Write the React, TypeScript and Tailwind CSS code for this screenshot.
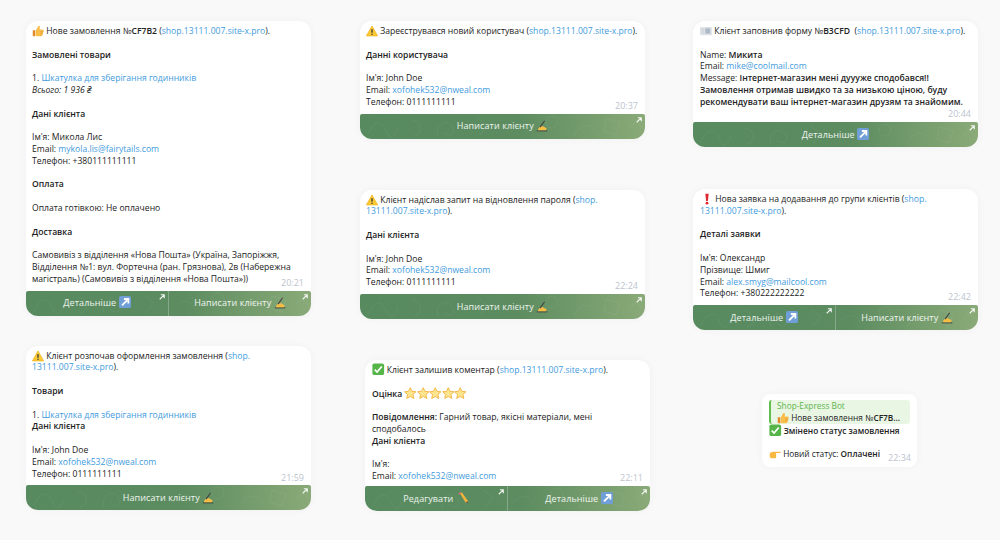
import type { ReactNode } from "react";

const LINK = "text-[#3f9bdc]";

function Thumb() {
  return (
    <svg width="12" height="12" viewBox="0 0 16 16" className="my-[-2px] inline-block align-[-1px]">
      <path d="M1 7h3.400v8H2a1 1 0 0 1-1-1z" fill="#e08a2e" />
      <path d="M5 7.200 8.400 1.600c.9-.8 2.300-.2 2.200 1.100L10.200 6H14c1.300 0 1.900 1.200 1.400 2.200l-1.500 5.600c-.2.800-.9 1.200-1.700 1.200H7c-1.200 0-2-.7-2-1.500z" fill="#f9bd4a" />
      <path d="M11 9h4M11 11.500h3.500" stroke="#dd9530" strokeWidth=".8" />
    </svg>
  );
}

function Warn() {
  return (
    <svg width="12" height="12" viewBox="0 0 16 16" className="my-[-2px] inline-block align-[-1px]">
      <path d="M8 1.200 15.500 14.500H.5z" fill="#fbc934" stroke="#f2b51f" strokeLinejoin="round" />
      <rect x="7.100" y="5.400" width="1.800" height="5" rx=".8" fill="#3b3b3b" />
      <circle cx="8" cy="12.200" r="1" fill="#3b3b3b" />
    </svg>
  );
}

function CardIndex() {
  return (
    <svg width="12" height="12" viewBox="0 0 16 16" className="my-[-2px] inline-block align-[-1px]">
      <rect x="0" y="2.500" width="16" height="11" rx="1" fill="#dfe3e8" />
      <rect x="7" y="4.500" width="6.500" height="7" fill="#aeb9c6" />
      <path d="M2 5.500h3.500M2 8h3.500M2 10.500h3.500" stroke="#c3c9d1" strokeWidth="1" />
    </svg>
  );
}

function Bang() {
  return (
    <svg width="12" height="12" viewBox="0 0 16 16" className="my-[-2px] ml-[1px] inline-block align-[-1px]">
      <path d="M5.800 1h4.400L9.200 10.500H6.800z" fill="#e0262e" />
      <circle cx="8" cy="13.500" r="1.900" fill="#e0262e" />
    </svg>
  );
}

function CheckBox() {
  return (
    <svg width="12.500" height="12.500" viewBox="0 0 16 16" className="my-[-2px] inline-block align-[-1px]">
      <rect x=".5" y=".5" width="15" height="15" rx="2.500" fill="#55b548" />
      <path d="m3.500 8.500 3 3 6-7" fill="none" stroke="#fff" strokeWidth="2.200" />
    </svg>
  );
}

function Star() {
  return (
    <svg width="12.500" height="12.500" viewBox="0 0 16 16" className="my-[-2px] inline-block align-[-1px]">
      <path d="m8 .8 2.200 4.700 5.100.6-3.800 3.500 1 5.100L8 12.200l-4.500 2.500 1-5.100L.7 6.100l5.100-.6z" fill="#fde58f" stroke="#f2b03a" strokeWidth="1.100" strokeLinejoin="round" />
    </svg>
  );
}

function Pencil() {
  return (
    <svg width="12" height="12" viewBox="0 0 16 16" className="my-[-2px] ml-[1px] inline-block align-[0px]">
      <path d="m4 1.500 2.500-1L14 11l1 4-3.800-1.500z" fill="#f5b23d" />
      <path d="M2.500 3.500 6 1 4.800 .3 1.800 1.500z" fill="#e8697a" />
      <path d="m12 13.600 2-1.300 1 2.900z" fill="#444" />
    </svg>
  );
}

function WriteHand() {
  return (
    <svg width="12" height="12" viewBox="0 0 16 16" className="my-[-2px] inline-block align-[-1px]">
      <path d="M1 14.500h14" stroke="#3b3b3b" strokeWidth="1.200" />
      <path d="M2.500 13.500c.5-3 3-5.500 6-5.500l5 2.500c1 .8.800 2.500-.5 3z" fill="#f6bd45" />
      <path d="m5.500 9.500 6-8.500" stroke="#444" strokeWidth="1.500" />
    </svg>
  );
}

function ArrowBox() {
  return (
    <svg width="12" height="12" viewBox="0 0 16 16" className="my-[-2px] inline-block align-[0px]">
      <rect width="16" height="16" rx="2.500" fill="#6f9fd6" />
      <path d="M4 12.500 11 5.500M6.500 4h6v6" fill="none" stroke="#fff" strokeWidth="2.400" />
    </svg>
  );
}

function PointRight() {
  return (
    <svg width="12" height="9" viewBox="0 0 16 12" className="my-[-2px] inline-block align-[0px]">
      <path d="M1 4.500c1-1 3-2.200 5-2.200h9c.8 0 .8 1.700 0 1.700H9.500v5.500c0 1-1 1.500-2 1.500H4c-1.500 0-3-.8-3-2z" fill="#f9b83f" />
    </svg>
  );
}

function Doodles() {
  return (
    <svg className="absolute inset-0 h-full w-full" viewBox="0 0 285 25" preserveAspectRatio="xMidYMid slice" fill="none" stroke="#ffffff" strokeOpacity=".06" strokeWidth="1">
      <path d="M8 20c6-14 14-14 18-4s8 8 12-2M52 6c10 2 12 14 2 16M78 22c-4-10 8-18 14-10s-4 12-8 6M118 4l10 8-8 9M146 18c8-10 18-10 22 0M186 8a6 6 0 1 0 12 0 6 6 0 1 0-12 0M214 22c6-12 16-14 20-6M246 5l14 4-4 12-12-4zM270 14c4-6 8-6 12 0" />
    </svg>
  );
}

function TgButton({ children }: { children: ReactNode }) {
  return (
    <div className="relative flex flex-1 items-center justify-center text-[9px] font-medium tracking-[0.1px] text-white/90">
      <span className="relative">{children}</span>
      <svg width="6" height="6" viewBox="0 0 8 8" className="absolute top-[3px] right-[3px]">
        <path d="M1 7 6.500 1.500M2.500 1h4.500v4.500" fill="none" stroke="#fff" strokeOpacity=".9" strokeWidth="1.500" />
      </svg>
    </div>
  );
}

function Buttons({ items }: { items: ReactNode[] }) {
  return (
    <div className="relative flex h-[25px] overflow-hidden rounded-t-[2px] rounded-b-[12px] bg-[linear-gradient(90deg,#588a60_0%,#5c8c60_55%,#8aaa78_100%)]">
      <Doodles />
      {items.map((item, i) => (
        <div key={i} className={`relative flex flex-1 ${i > 0 ? "border-l border-white/25" : ""}`}>
          <TgButton>{item}</TgButton>
        </div>
      ))}
    </div>
  );
}

function Card({
  time,
  buttons,
  className,
  children,
}: {
  time: string;
  buttons: ReactNode[];
  className?: string;
  children: ReactNode;
}) {
  return (
    <div className={`w-[285px] rounded-[12px] bg-white shadow-[0_0_8px_rgba(0,0,0,0.04)] ${className ?? ""}`}>
      <div className="relative px-[6px] pt-[5px] pb-[5px] text-[8.600px] leading-[11.800px] text-[#222]">
        {children}
        <span className="absolute right-[7px] bottom-[2px] text-[9px] text-[#bcc4ce]">{time}</span>
      </div>
      <Buttons items={buttons} />
    </div>
  );
}

const More = (
  <>
    Детальніше <ArrowBox />
  </>
);
const Write = (
  <>
    Написати клієнту <WriteHand />
  </>
);
const Edit = (
  <>
    Редагувати <Pencil />
  </>
);

const Site = <span className={LINK}>shop.13111.007.site-x.pro</span>;
const Sp = () => <div className="h-[11.800px]" />;

export default function App() {
  return (
    <div
      className="flex h-[540px] w-[1000px] overflow-hidden bg-[#f9f9f9]"
      style={{ fontFamily: '"Open Sans", "Noto Sans", sans-serif' }}
    >
      {/* left column */}
      <div className="ml-[26px] flex flex-col pt-[21px]">
        <Card time="20:21" buttons={[More, Write]}>
          <div>
            <Thumb /> Нове замовлення №<b className="font-semibold">CF7B2</b> ({Site}).
          </div>
          <Sp />
          <b className="font-semibold">Замовлені товари</b>
          <Sp />
          <div>
            1. <span className={LINK}>Шкатулка для зберігання годинників</span>
          </div>
          <i>Всього: 1 936 ₴</i>
          <Sp />
          <b className="font-semibold">Дані клієнта</b>
          <Sp />
          <div>Ім'я: Микола Лис</div>
          <div>
            Email: <span className={LINK}>mykola.lis@fairytails.com</span>
          </div>
          <div>Телефон: +380111111111</div>
          <Sp />
          <b className="font-semibold">Оплата</b>
          <Sp />
          <div>Оплата готівкою: Не оплачено</div>
          <Sp />
          <b className="font-semibold">Доставка</b>
          <Sp />
          <div>
            Самовивіз з відділення «Нова Пошта» (Україна, Запоріжжя,
            <br />
            Відділення №1: вул. Фортечна (ран. Грязнова), 2в (Набережна
            <br />
            магістраль) (Самовивіз з відділення «Нова Пошта»))
          </div>
        </Card>

        <Card time="21:59" buttons={[Write]} className="mt-[30px]">
          <div>
            <Warn /> Клієнт розпочав оформлення замовлення (<span className={LINK}>shop.</span>
            <br />
            <span className={LINK}>13111.007.site-x.pro</span>).
          </div>
          <Sp />
          <b className="font-semibold">Товари</b>
          <Sp />
          <div>
            1. <span className={LINK}>Шкатулка для зберігання годинників</span>
          </div>
          <b className="font-semibold">Дані клієнта</b>
          <Sp />
          <div>Ім'я: John Doe</div>
          <div>
            Email: <span className={LINK}>xofohek532@nweal.com</span>
          </div>
          <div>Телефон: 0111111111</div>
        </Card>
      </div>

      {/* middle column */}
      <div className="ml-[49px] flex flex-col pt-[21px]">
        <Card time="20:37" buttons={[Write]}>
          <div className="whitespace-nowrap">
            <Warn /> Зареєструвався новий користувач ({Site}).
          </div>
          <Sp />
          <b className="font-semibold">Данні користувача</b>
          <Sp />
          <div>Ім'я: John Doe</div>
          <div>
            Email: <span className={LINK}>xofohek532@nweal.com</span>
          </div>
          <div>Телефон: 0111111111</div>
        </Card>

        <Card time="22:24" buttons={[Write]} className="mt-[51px]">
          <div>
            <Warn /> Клієнт надіслав запит на відновлення пароля (<span className={LINK}>shop.</span>
            <br />
            <span className={LINK}>13111.007.site-x.pro</span>).
          </div>
          <Sp />
          <b className="font-semibold">Дані клієнта</b>
          <Sp />
          <div>Ім'я: John Doe</div>
          <div>
            Email: <span className={LINK}>xofohek532@nweal.com</span>
          </div>
          <div>Телефон: 0111111111</div>
        </Card>

        <Card time="22:11" buttons={[Edit, More]} className="mt-[41px] ml-[5px] [&>div:first-child]:pl-[7px]">
          <div>
            <CheckBox /> Клієнт залишив коментар ({Site}).
          </div>
          <Sp />
          <div>
            <b className="font-semibold">Оцінка</b> <Star />
            <Star />
            <Star />
            <Star />
            <Star />
          </div>
          <Sp />
          <div>
            <b className="font-semibold">Повідомлення:</b> Гарний товар, якісні матеріали, мені
            <br />
            сподобалось
          </div>
          <b className="font-semibold">Дані клієнта</b>
          <Sp />
          <div>Ім'я:</div>
          <div className="mb-[-2px]">
            Email: <span className={LINK}>xofohek532@nweal.com</span>
          </div>
        </Card>
      </div>

      {/* right column */}
      <div className="ml-[43px] flex flex-col pt-[21px]">
        <Card time="20:44" buttons={[More]} className="[&>div:first-child]:pl-[7px]">
          <div>
            <CardIndex /> Клієнт заповнив форму №<b className="font-semibold">B3CFD</b>&nbsp; ({Site}).
          </div>
          <Sp />
          <div>
            Name: <b className="font-semibold">Микита</b>
          </div>
          <div>
            Email: <span className={LINK}>mike@coolmail.com</span>
          </div>
          <div>
            Message: <b className="font-semibold">Інтернет-магазин мені дуууже сподобався!!</b>
          </div>
          <b className="font-semibold">
            Замовлення отримав швидко та за низькою ціною, буду
            <br />
            рекомендувати ваш інтернет-магазин друзям та знайомим.
          </b>
          <div className="h-[8.500px]" />
        </Card>

        <Card time="22:42" buttons={[More, Write]} className="mt-[42px] [&>div:first-child]:pl-[7px]">
          <div>
            <Bang /> Нова заявка на додавання до групи клієнтів (<span className={LINK}>shop.</span>
            <br />
            <span className={LINK}>13111.007.site-x.pro</span>).
          </div>
          <Sp />
          <b className="font-semibold">Деталі заявки</b>
          <Sp />
          <div>Ім'я: Олександр</div>
          <div>Прізвище: Шмиг</div>
          <div>
            Email: <span className={LINK}>alex.smyg@mailcool.com</span>
          </div>
          <div>Телефон: +380222222222</div>
        </Card>

        <div className="relative mt-[64px] ml-[69px] h-[73px] w-[155px] rounded-[8px] bg-white px-[7px] pt-[6px] text-[8.300px] leading-[11.800px] text-[#222] shadow-[0_0_8px_rgba(0,0,0,0.04)]">
          <div className="mb-[1px] rounded-[3px] border-l-2 border-[#62bd4f] bg-[#e9f6e4] pl-[6px]">
            <div className="text-[#5cb54b]">Shop-Express Bot</div>
            <div className="whitespace-nowrap">
              <Thumb /> Нове замовлення №<b className="font-semibold">CF7B...</b>
            </div>
          </div>
          <b className="font-semibold">
            <CheckBox /> Змінено статус замовлення
          </b>
          <Sp />
          <div>
            <PointRight /> Новий статус: <b className="font-semibold">Оплачені</b>
          </div>
          <span className="absolute right-[6px] bottom-[3px] text-[9px] text-[#bcc4ce]">22:34</span>
        </div>
      </div>
    </div>
  );
}
